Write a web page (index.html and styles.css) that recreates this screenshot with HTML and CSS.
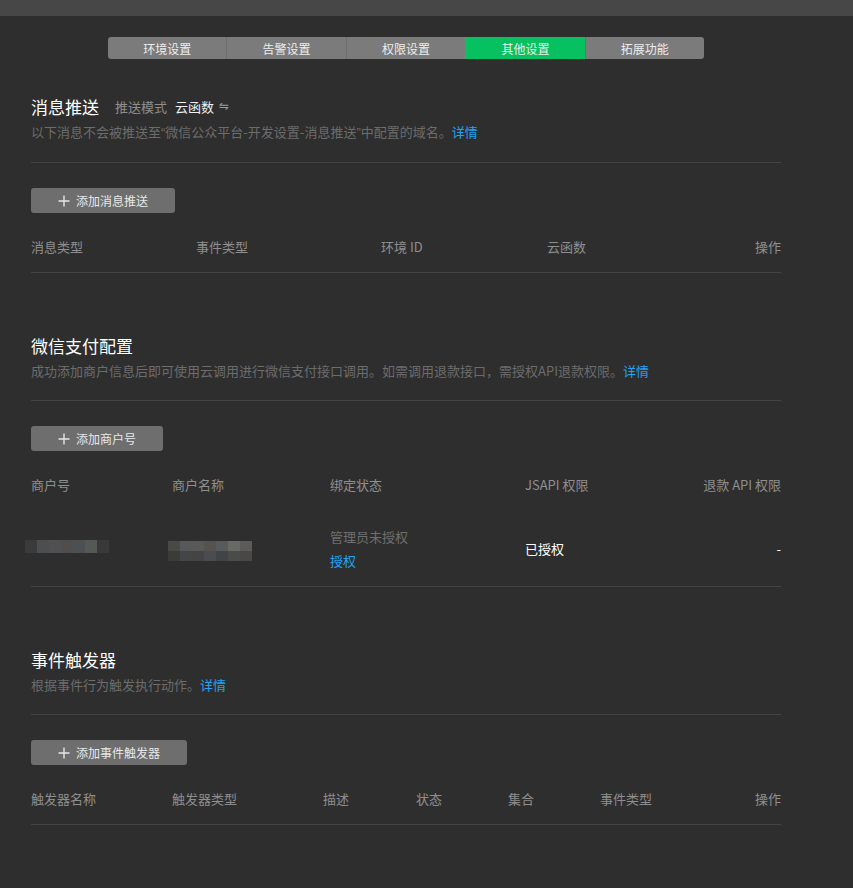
FILE: index.html
```html
<!DOCTYPE html>
<html lang="zh-CN">
<head>
    <meta charset="utf-8" />
    <title>其他设置</title>
    <link rel="stylesheet" href="styles.css">
</head>
<body>
    <div class="topbar"></div>

    <div class="tabs">
        <div class="tab">环境设置</div>
        <div class="tab">告警设置</div>
        <div class="tab">权限设置</div>
        <div class="tab active">其他设置</div>
        <div class="tab">拓展功能</div>
    </div>

    <div class="container">
        <!-- 消息推送 -->
        <div class="section first">
            <div class="sec-head">
                <h2>消息推送</h2>
                <span class="mode-label">推送模式</span>
                <span class="mode-value">云函数</span>
                <span class="switch">⇋</span>
            </div>
            <p class="desc">以下消息不会被推送至<span class="q">“</span>微信公众平台-开发设置-消息推送<span class="q">”</span>中配置的域名。<a href="#">详情</a></p>
            <div class="divider"></div>
            <button class="add-btn">
                <svg width="12" height="12" viewBox="0 0 12 12"><path d="M6 0.5V11.5M0.5 6H11.5" stroke="#e6e6e6" stroke-width="1.4"/></svg>
                添加消息推送
            </button>
            <div class="table-head cols-msg bordered">
                <span>消息类型</span>
                <span>事件类型</span>
                <span>环境 ID</span>
                <span>云函数</span>
                <span class="right">操作</span>
            </div>
        </div>

        <!-- 微信支付配置 -->
        <div class="section">
            <div class="sec-head">
                <h2>微信支付配置</h2>
            </div>
            <p class="desc">成功添加商户信息后即可使用云调用进行微信支付接口调用。如需调用退款接口，需授权API退款权限。<a href="#">详情</a></p>
            <div class="divider"></div>
            <button class="add-btn">
                <svg width="12" height="12" viewBox="0 0 12 12"><path d="M6 0.5V11.5M0.5 6H11.5" stroke="#e6e6e6" stroke-width="1.4"/></svg>
                添加商户号
            </button>
            <div class="table-head cols-pay">
                <span>商户号</span>
                <span>商户名称</span>
                <span>绑定状态</span>
                <span>JSAPI 权限</span>
                <span class="right">退款 API 权限</span>
            </div>
            <div class="table-row cols-pay bordered">
                <div class="blur blur-id">
                    <i style="background:#3b3b3b"></i><i style="background:#4d4e50"></i><i style="background:#505053"></i><i style="background:#4f4e4c"></i><i style="background:#4d5052"></i><i style="background:#565856"></i><i style="background:#393939"></i>
                </div>
                <div class="blur blur-name">
                    <div class="blur-line">
                        <i style="background:#474a46"></i><i style="background:#575859"></i><i style="background:#59595a"></i><i style="background:#56534f"></i><i style="background:#575b5d"></i><i style="background:#676a65"></i><i style="background:#5d5a5b"></i>
                    </div>
                    <div class="blur-line">
                        <i style="background:#3b3c38"></i><i style="background:#444546"></i><i style="background:#434443"></i><i style="background:#4b4c4f"></i><i style="background:#404445"></i><i style="background:#4a4b4b"></i><i style="background:#484847"></i>
                    </div>
                </div>
                <div class="status">
                    <span class="muted">管理员未授权</span>
                    <a href="#">授权</a>
                </div>
                <span class="white">已授权</span>
                <span class="white right">-</span>
            </div>
        </div>

        <!-- 事件触发器 -->
        <div class="section">
            <div class="sec-head">
                <h2>事件触发器</h2>
            </div>
            <p class="desc">根据事件行为触发执行动作。<a href="#">详情</a></p>
            <div class="divider"></div>
            <button class="add-btn">
                <svg width="12" height="12" viewBox="0 0 12 12"><path d="M6 0.5V11.5M0.5 6H11.5" stroke="#e6e6e6" stroke-width="1.4"/></svg>
                添加事件触发器
            </button>
            <div class="table-head cols-trig bordered">
                <span>触发器名称</span>
                <span>触发器类型</span>
                <span>描述</span>
                <span>状态</span>
                <span>集合</span>
                <span>事件类型</span>
                <span class="right">操作</span>
            </div>
        </div>
    </div>
</body>
</html>
```

FILE: styles.css
```css
body {
    margin: 0;
    background-color: #2e2e2e;
    font-family: "Noto Sans CJK SC", "Noto Sans", sans-serif;
    color: #8c8c8c;
    height: 888px;
    overflow: hidden;
}

.topbar {
    height: 16px;
    background-color: #474747;
}

/* tabs */
.tabs {
    display: flex;
    margin: 21px 0 0 108px;
    width: 596px;
    height: 22px;
    border-radius: 3px;
    overflow: hidden;
    background-color: #7b7b7b;
}

.tab {
    flex: 1;
    text-align: center;
    font-size: 12px;
    line-height: 23px;
    color: #ededed;
    border-left: 1px solid #6e6e6e;
}

.tab:first-child {
    border-left: none;
}

.tab.active {
    background-color: #07c160;
    border-left-color: #07c160;
}

.container {
    width: 750px;
    margin-left: 31px;
}

.section {
    margin-top: 60px;
}

.section.first {
    margin-top: 35px;
}

.sec-head {
    display: flex;
    align-items: center;
    height: 24px;
}

.sec-head h2 {
    margin: 0;
    font-size: 17px;
    font-weight: normal;
    color: #ffffff;
    margin-right: 16px;
}

.mode-label {
    font-size: 13px;
    color: #8e8e8e;
    margin-right: 8px;
}

.mode-value {
    font-size: 13px;
    color: #f0f0f0;
    margin-right: 5px;
}

.switch {
    font-size: 12px;
    color: #9a9a9a;
    font-family: "DejaVu Sans", sans-serif;
}

.desc {
    margin: 4px 0 0 0;
    font-size: 13px;
    line-height: 20px;
    color: #6c6c6c;
}

.desc .q {
    font-family: "Liberation Sans", sans-serif;
}

.desc a {
    color: #1ea3f5;
    text-decoration: none;
}

.divider {
    margin-top: 19px;
    border-top: 1px solid #444444;
}

.add-btn {
    display: flex;
    align-items: center;
    justify-content: center;
    gap: 6px;
    margin-top: 25px;
    height: 25px;
    padding: 0 27px;
    border: none;
    border-radius: 3px;
    background-color: #6e6e6e;
    color: #e8e8e8;
    font-family: inherit;
    font-size: 12px;
}

/* tables */
.table-head,
.table-row {
    display: grid;
    align-items: center;
    font-size: 13px;
}

.table-head {
    margin-top: 7px;
    height: 52px;
    color: #8e8e8e;
}

.bordered {
    border-bottom: 1px solid #444444;
}

.right {
    text-align: right;
}

.cols-msg {
    grid-template-columns: 165px 185px 166px 1fr 80px;
}

.cols-pay {
    grid-template-columns: 141px 158px 195px 1fr 120px;
}

.cols-trig {
    grid-template-columns: 141px 151px 93px 92px 92px 1fr 80px;
}

.table-row {
    height: 76px;
}

.white {
    color: #ffffff;
}

.status {
    display: flex;
    flex-direction: column;
    gap: 3px;
    line-height: 21px;
}

.muted {
    color: #6f6f6f;
}

.status a {
    color: #1ea3f5;
    text-decoration: none;
}

/* mosaic placeholders */
.blur {
    display: flex;
    flex-direction: column;
}

.blur i {
    display: block;
    width: 12px;
    height: 13px;
}

.blur-id {
    flex-direction: row;
    margin-left: -6px;
    margin-top: -4px;
}

.blur-name {
    margin-left: -4px;
    margin-top: 6px;
}

.blur-name i {
    height: 10px;
}

.blur-line {
    display: flex;
}
```
